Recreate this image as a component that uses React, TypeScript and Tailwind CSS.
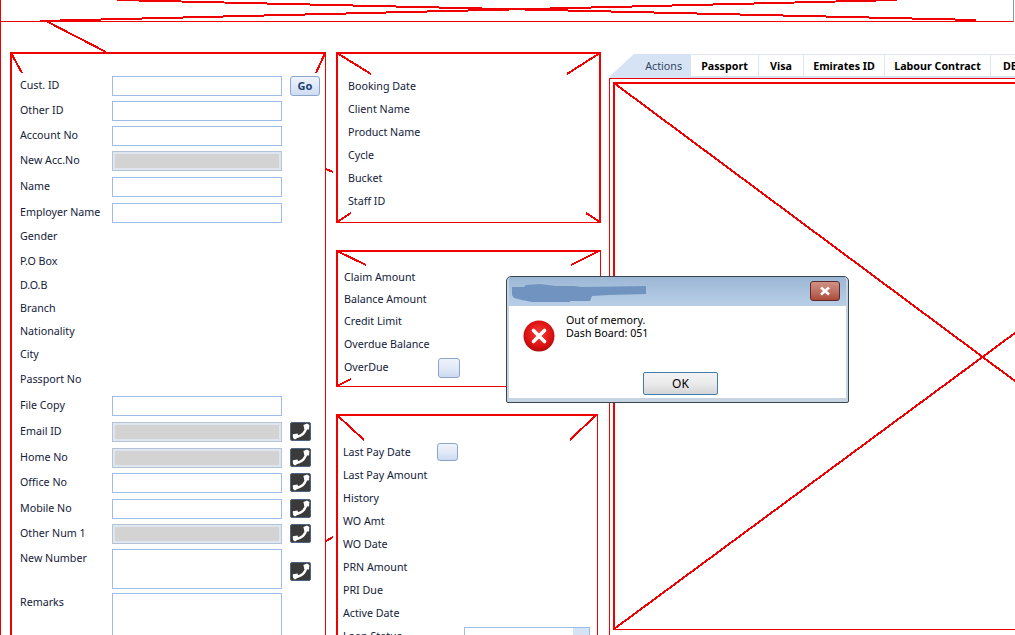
import React from 'react';

type FieldKind = 'input' | 'disabled' | 'none';

interface Field {
  label: string;
  kind: FieldKind;
  rowClass: string;
  boxClass?: string;
  action?: 'go' | 'phone';
}

const customerFields: Field[] = [
  { label: 'Cust. ID', kind: 'input', rowClass: 'h-[25px]', action: 'go' },
  { label: 'Other ID', kind: 'input', rowClass: 'h-[25px]' },
  { label: 'Account No', kind: 'input', rowClass: 'h-[25px]' },
  { label: 'New Acc.No', kind: 'disabled', rowClass: 'h-[26px]' },
  { label: 'Name', kind: 'input', rowClass: 'h-[26px]' },
  { label: 'Employer Name', kind: 'input', rowClass: 'h-[23px]' },
  { label: 'Gender', kind: 'none', rowClass: 'h-[25px]' },
  { label: 'P.O Box', kind: 'none', rowClass: 'h-[24px]' },
  { label: 'D.O.B', kind: 'none', rowClass: 'h-[23px]' },
  { label: 'Branch', kind: 'none', rowClass: 'h-[23px]' },
  { label: 'Nationality', kind: 'none', rowClass: 'h-[23px]' },
  { label: 'City', kind: 'none', rowClass: 'h-[25px]' },
  { label: 'Passport No', kind: 'none', rowClass: 'h-[27px]' },
  { label: 'File Copy', kind: 'input', rowClass: 'h-[26px]' },
  { label: 'Email ID', kind: 'disabled', rowClass: 'h-[26px]', action: 'phone' },
  { label: 'Home No', kind: 'disabled', rowClass: 'h-[25px]', action: 'phone' },
  { label: 'Office No', kind: 'input', rowClass: 'h-[26px]', action: 'phone' },
  { label: 'Mobile No', kind: 'input', rowClass: 'h-[25px]', action: 'phone' },
  { label: 'Other Num 1', kind: 'disabled', rowClass: 'h-[25px]', action: 'phone' },
  { label: 'New Number', kind: 'input', rowClass: 'h-[44px]', boxClass: 'h-[40px]', action: 'phone' },
  { label: 'Remarks', kind: 'input', rowClass: 'h-[60px]', boxClass: 'h-[60px]' },
];

const bookingLabels = ['Booking Date', 'Client Name', 'Product Name', 'Cycle', 'Bucket', 'Staff ID'];
const claimLabels = ['Claim Amount', 'Balance Amount', 'Credit Limit', 'Overdue Balance'];
const paymentLabels = ['Last Pay Amount', 'History', 'WO Amt', 'WO Date', 'PRN Amount', 'PRI Due', 'Active Date'];
const tabs = [
  { name: 'Passport', width: 'w-[68px]' },
  { name: 'Visa', width: 'w-[45px]' },
  { name: 'Emirates ID', width: 'w-[81px]' },
  { name: 'Labour Contract', width: 'w-[106px]' },
];

function PhoneButton({ className = '' }: { className?: string }) {
  return (
    <button
      type="button"
      aria-label="Call"
      className={`flex h-[19px] w-[21px] items-center justify-center rounded-[2px] border border-[#4d6484] bg-[#3a3a3a] ${className}`}
    >
      <svg width="18" height="17" viewBox="0 0 18 17" fill="none">
        <path d="M3 13.6C9.5 14 14 9.5 14.4 3" stroke="white" strokeWidth="2.4" />
        <path d="M0.8 11.2L5.6 10.6L6.4 14.2L3 16.4L1 15Z" fill="white" />
        <path d="M11.4 2L15 0.4L17.4 2L17 6.6L12.4 6.2Z" fill="white" />
      </svg>
    </button>
  );
}

function BlueButton({ className = '' }: { className?: string }) {
  return (
    <button
      type="button"
      aria-label="Select"
      className={`rounded-[3px] border border-[#8ba6cd] bg-linear-to-b from-[#eef3fb] via-[#e2eaf7] to-[#ccdaf0] ${className}`}
    />
  );
}

function CustomerRow({ field }: { field: Field }) {
  const box = field.boxClass ?? 'h-[20px]';
  return (
    <div className={`flex items-start ${field.rowClass}`}>
      <span className={`w-[92px] shrink-0 leading-[20px] ${field.kind === 'none' ? '' : '-mt-px'}`}>{field.label}</span>
      {field.kind === 'input' && <div className={`w-[170px] shrink-0 border border-[#9dbde8] bg-white ${box}`} />}
      {field.kind === 'disabled' && (
        <div className={`w-[170px] shrink-0 border border-[#b4c3d8] bg-[#d3d3d3] shadow-[inset_0_0_0_2px_#dfe6ee] ${box}`} />
      )}
      {field.action === 'go' && (
        <button
          type="button"
          className="ml-2 h-[20px] w-[30px] rounded-[3px] border border-[#8ba6cd] bg-linear-to-b from-[#eff4fb] to-[#cfdcf1] text-[11px] font-bold text-[#1d3f74]"
        >
          Go
        </button>
      )}
      {field.action === 'phone' && (
        <PhoneButton className={field.boxClass ? 'mt-[13px] ml-2' : 'ml-2'} />
      )}
    </div>
  );
}

function ErrorIcon() {
  return (
    <svg width="32" height="32" viewBox="0 0 32 32" className="shrink-0">
      <defs>
        <radialGradient id="err" cx="50%" cy="42%" r="60%">
          <stop offset="0%" stopColor="#f4403a" />
          <stop offset="70%" stopColor="#dc1010" />
          <stop offset="100%" stopColor="#a80d0d" />
        </radialGradient>
      </defs>
      <circle cx="16" cy="16" r="15.5" fill="url(#err)" />
      <path d="M10.5 10.5L21.5 21.5M21.5 10.5L10.5 21.5" stroke="white" strokeWidth="3.6" strokeLinecap="round" />
    </svg>
  );
}

function ErrorDialog() {
  return (
    <div className="absolute top-[276px] left-[505px] z-20 flex h-[127px] w-[343px] flex-col rounded-t-[5px] rounded-b-[2px] border border-[#39454f] bg-[#c6d3e0] px-[2px] pb-[4px] text-[10.7px] leading-[13px] text-black">
      <div className="flex h-[29px] shrink-0 items-start justify-between bg-linear-to-b from-[#9cb7d5] to-[#b9cfe7] pr-[6px] pl-[3px]">
        <svg width="136" height="20" viewBox="0 0 136 20" className="mt-[6px]">
          <path
            d="M0 4L12 4L14 2L28 1L36 2L44 3L62 3L70 4L134 3L134 11L96 12L80 13L78 18L58 18L58 19L20 19L10 17L2 15L0 12Z"
            fill="#7094bf"
          />
        </svg>
        <button
          type="button"
          aria-label="Close"
          className="mt-[4px] flex h-[20px] w-[30px] items-center justify-center rounded-[3px] border border-[#5b2a2e] bg-linear-to-b from-[#cf9184] via-[#c07264] to-[#ad4a3a]"
        >
          <svg width="14" height="10" viewBox="0 0 14 10">
            <path d="M3 1.5L11 8.5M11 1.5L3 8.5" stroke="white" strokeWidth="2.6" />
          </svg>
        </button>
      </div>
      <div className="flex min-h-0 flex-1 flex-col bg-white">
        <div className="flex items-start pt-[8px] pl-[14px]">
          <div className="mt-[6px]">
            <ErrorIcon />
          </div>
          <p className="ml-[11px]">
            Out of memory.
            <br />
            Dash Board: 051
          </p>
        </div>
        <button
          type="button"
          className="mt-[20px] ml-[134px] h-[23px] w-[75px] rounded-[2px] border border-[#3e7fb3] bg-linear-to-b from-[#f3f3f3] via-[#ebebeb] to-[#d4d4d4] text-[12px]"
        >
          OK
        </button>
      </div>
    </div>
  );
}

export default function App() {
  return (
    <div className="relative h-[635px] w-[1015px] overflow-hidden border-l border-[#f00000] bg-white font-['Noto_Sans',sans-serif] text-[10.7px] text-[#14213a]">
      <div className="mr-px h-[22px] border-r border-b border-r-[#7f9db9] border-b-[#f00000]" />

      <div className="flex items-start pt-[30px] pl-[9px]">
        <section className="h-[600px] w-[316px] shrink-0 border-t-2 border-r border-l-2 border-[#f00000] pt-[22px] pl-[8px]">
          {customerFields.map((f) => (
            <CustomerRow key={f.label} field={f} />
          ))}
        </section>

        <div className="ml-[10px] flex w-[265px] shrink-0 flex-col items-start gap-[27px]">
          <section className="h-[171px] w-[265px] border-t-2 border-r-2 border-b border-l-2 border-[#f00000] pt-[21px] pl-[10px]">
            {bookingLabels.map((l) => (
              <div key={l} className="flex h-[23px] items-center">
                {l}
              </div>
            ))}
          </section>

          <section className="h-[137px] w-[265px] border-t-2 border-r border-b border-l-2 border-[#f00000] pt-[14px] pl-[6px]">
            {claimLabels.map((l, i) => (
              <div key={l} className={`flex items-center ${i < 2 ? 'h-[22px]' : 'h-[23px]'}`}>
                {l}
              </div>
            ))}
            <div className="flex h-[23px] items-center">
              <span className="w-[94px]">OverDue</span>
              <BlueButton className="h-[20px] w-[22px]" />
            </div>
          </section>

          <section className="h-[240px] w-[262px] border-t-2 border-r border-l-2 border-[#f00000] pt-[25px] pl-[5px]">
            <div className="flex h-[23px] items-center">
              <span className="w-[94px]">Last Pay Date</span>
              <BlueButton className="mb-[2px] h-[18px] w-[21px]" />
            </div>
            {paymentLabels.map((l) => (
              <div key={l} className="flex h-[23px] items-center">
                {l}
              </div>
            ))}
            <div className="flex h-[23px] items-center">
              <span className="w-[121px]">Loan Status</span>
              <div className="flex h-[20px] w-[126px] justify-end border border-[#9dbde8] bg-white">
                <div className="w-[16px] bg-[#d6e3f5]" />
              </div>
            </div>
          </section>
        </div>

        <div className="ml-[8px] min-w-0 flex-1 pt-[2px]">
          <div className="flex h-[22px] items-stretch overflow-hidden pl-px">
            <div className="flex w-[81px] shrink-0 items-center justify-end bg-[#d6e3f5] pt-[2px] pr-[9px] text-[#33475f] [clip-path:polygon(0_100%,24px_0,100%_0,100%_100%)]">
              Actions
            </div>
            {tabs.map((t) => (
              <div
                key={t.name}
                className={`flex shrink-0 items-center justify-center border-t border-r border-[#dce6f3] pt-px font-bold text-black ${t.width}`}
              >
                {t.name}
              </div>
            ))}
            <div className="flex w-[40px] shrink-0 items-center border-t border-[#dce6f3] pt-px pl-[12px] font-bold text-black">
              DEBT
            </div>
          </div>
          <div className="ml-px h-[2px] bg-[#d6e3f5]" />
          <div className="h-[560px] border-t border-l border-[#f00000] pt-[3px] pl-[3px]">
            <div className="h-[548px] border-t-2 border-b border-l-2 border-[#f00000]" />
          </div>
        </div>
      </div>

      <svg
        className="pointer-events-none absolute top-0 -left-px z-10"
        width="1015"
        height="635"
        fill="none"
        stroke="#f00000"
        shapeRendering="crispEdges"
      >
        <g strokeWidth="2">
          <path d="M117 0L976 20" />
          <path d="M40 21L897 0" />
          <path d="M46 21L106 52" />
          <path d="M11 53L22 73M325 53L316 73" />
          <path d="M326 169L333 172M326 541L333 537" />
          <path d="M337 53L371 74M600 53L567 74M337 222L351 213M600 222L586 213" />
          <path d="M337 251L366 265M599 251L571 265M337 386L351 379" />
          <path d="M337 415L364 440M596 415L570 440" />
          <path d="M614 83L1015 381M614 629L1015 333" />
        </g>
      </svg>

      <ErrorDialog />
    </div>
  );
}
